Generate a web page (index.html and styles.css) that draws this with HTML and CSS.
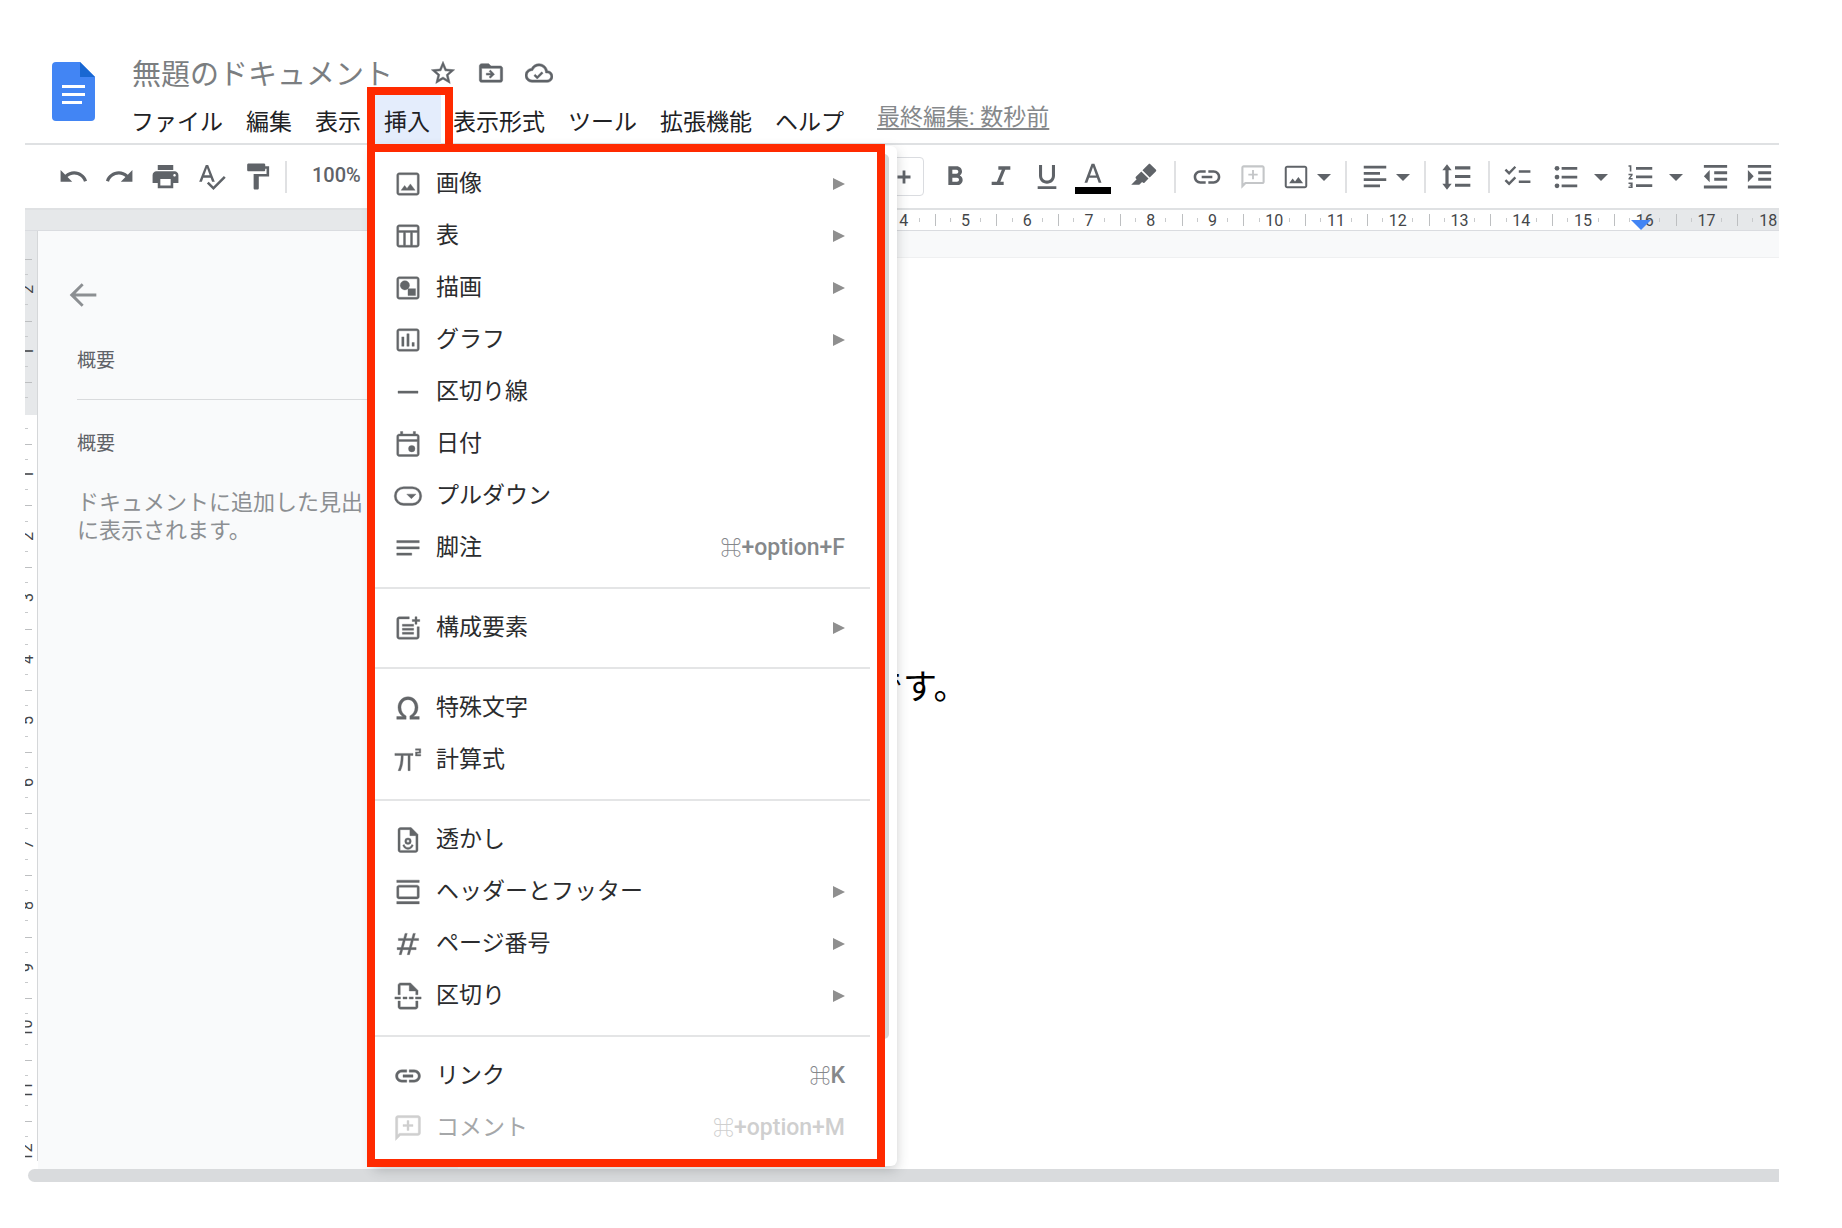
FILE: index.html
```html
<!DOCTYPE html>
<html lang="ja">
<head>
<meta charset="utf-8">
<title>無題のドキュメント</title>
<link rel="stylesheet" href="styles.css">
</head>
<body>
<svg class="sprite" aria-hidden="true">
  <defs>
    <symbol id="i-star" viewBox="0 0 24 24"><path d="M22 9.24l-7.19-.62L12 2 9.19 8.63 2 9.24l5.46 4.73L5.82 21 12 17.27 18.18 21l-1.63-7.03L22 9.24zM12 15.4l-3.76 2.27 1-4.28-3.32-2.88 4.38-.38L12 6.1l1.71 4.04 4.38.38-3.32 2.88 1 4.28L12 15.4z"/></symbol>
    <symbol id="i-move" viewBox="0 0 24 24"><path d="M20 6h-8l-2-2H4c-1.1 0-2 .9-2 2v12c0 1.100.9 2 2 2h16c1.100 0 2-.9 2-2V8c0-1.100-.9-2-2-2zm0 12H4V8h16v10zM11.500 9.500l3.500 3.500-3.500 3.500-1.100-1.100 1.600-1.600H8v-1.600h4l-1.600-1.600z"/></symbol>
    <symbol id="i-cloud" viewBox="0 0 24 24"><path d="M19.350 10.040C18.670 6.590 15.640 4 12 4 9.110 4 6.600 5.640 5.350 8.040 2.340 8.360 0 10.910 0 14c0 3.310 2.690 6 6 6h13c2.760 0 5-2.240 5-5 0-2.640-2.050-4.780-4.650-4.960zM19 18H6c-2.210 0-4-1.790-4-4 0-2.050 1.530-3.760 3.560-3.970l1.070-.11.5-.95C8.080 7.140 9.940 6 12 6c2.620 0 4.880 1.860 5.390 4.430l.3 1.500 1.530.11c1.560.1 2.780 1.410 2.780 2.960 0 1.650-1.350 3-3 3zm-8.500-3.200l-1.700-1.700-1.200 1.200 2.900 2.900 5-5-1.200-1.200z"/></symbol>
    <symbol id="i-undo" viewBox="0 0 24 24"><path d="M12.500 8c-2.650 0-5.050.99-6.900 2.600L2 7v9h9l-3.620-3.620c1.390-1.160 3.160-1.880 5.120-1.880 3.540 0 6.550 2.310 7.600 5.500l2.370-.78C21.080 11.030 17.150 8 12.500 8z"/></symbol>
    <symbol id="i-redo" viewBox="0 0 24 24"><path d="M18.400 10.600C16.550 8.990 14.150 8 11.500 8c-4.650 0-8.580 3.030-9.960 7.220L3.900 16c1.050-3.190 4.050-5.500 7.600-5.500 1.950 0 3.730.72 5.120 1.880L13 16h9V7l-3.600 3.600z"/></symbol>
    <symbol id="i-print" viewBox="0 0 24 24"><path d="M19 8H5c-1.660 0-3 1.340-3 3v6h4v4h12v-4h4v-6c0-1.660-1.340-3-3-3zm-3 11H8v-5h8v5zm3-7c-.55 0-1-.45-1-1s.45-1 1-1 1 .45 1 1-.45 1-1 1zm-1-9H6v4h12V3z"/></symbol>
    <symbol id="i-spell" viewBox="0 0 24 24"><path d="M12.450 16h2.090L9.430 3H7.570L2.460 16h2.090l1.120-3h5.640l1.140 3zm-6.020-5L8.500 5.480 10.570 11H6.430zm15.160.59l-8.090 8.090L9.830 16l-1.410 1.410 5.090 5.090L23 13l-1.410-1.410z"/></symbol>
    <symbol id="i-paint" viewBox="0 0 24 24"><path d="M18 4V3c0-.55-.45-1-1-1H5c-.55 0-1 .45-1 1v4c0 .55.45 1 1 1h12c.55 0 1-.45 1-1V6h1v4H9v11c0 .55.45 1 1 1h2c.55 0 1-.45 1-1v-9h8V4h-3z"/></symbol>
    <symbol id="i-plus" viewBox="0 0 24 24"><path d="M18.500 13.400h-5.100v5.100h-2.800v-5.100H5.500v-2.800h5.100V5.500h2.800v5.100h5.100z"/></symbol>
    <symbol id="i-bold" viewBox="0 0 24 24"><path d="M15.600 10.790c.97-.67 1.650-1.770 1.650-2.790 0-2.260-1.750-4-4-4H7v14h7.040c2.090 0 3.710-1.700 3.710-3.790 0-1.520-.86-2.820-2.150-3.420zM10 6.500h3c.83 0 1.500.67 1.500 1.500s-.67 1.500-1.500 1.500h-3v-3zm3.500 9H10v-3h3.500c.83 0 1.500.67 1.500 1.500s-.67 1.500-1.500 1.500z"/></symbol>
    <symbol id="i-italic" viewBox="0 0 24 24"><path d="M10 4v2.500h2.600l-3.700 9H5V18h9v-2.500h-2.500l3.700-9H19V4z"/></symbol>
    <symbol id="i-underline" viewBox="0 0 24 24"><path d="M12 17c3.310 0 6-2.690 6-6V3h-2.300v8c0 2.100-1.600 3.700-3.700 3.700S8.300 13.100 8.300 11V3H6v8c0 3.310 2.690 6 6 6zm-7 2v2h14v-2H5z"/></symbol>
    <symbol id="i-color" viewBox="0 0 30 36"><path d="M13.500 3h3L24 23h-3l-1.900-5.100h-8.200L9 23H6zm-1.700 12.300h6.400L15 6.500z" transform="translate(0 1)"/></symbol>
    <symbol id="i-marker" viewBox="0 0 24 24"><path d="M17.300 2.500l4.200 4.100c.5.500.5 1 0 1.500l-4.700 4.600-5.600-5.500 4.700-4.700c.4-.4 1-.4 1.400 0zM10.300 8.100l5.600 5.500-3 3c-.5.500-1 .5-1.500.1l-.5-.5-2.200 2.200H2.500l4.200-4.200-.6-.6c-.4-.5-.4-1 0-1.500z"/></symbol>
    <symbol id="i-link" viewBox="0 0 24 24"><path d="M3.900 12c0-1.710 1.390-3.100 3.100-3.100h4V7H7c-2.760 0-5 2.240-5 5s2.240 5 5 5h4v-1.900H7c-1.710 0-3.100-1.390-3.100-3.100zM8 13h8v-2H8v2zm9-6h-4v1.900h4c1.710 0 3.100 1.390 3.100 3.100s-1.390 3.100-3.100 3.100h-4V17h4c2.760 0 5-2.240 5-5s-2.240-5-5-5z"/></symbol>
    <symbol id="i-comment" viewBox="0 0 24 24"><path d="M2 22V4c0-1.100.9-2 2-2h16c1.100 0 2 .9 2 2v12c0 1.100-.9 2-2 2H6zM3.800 17.400l1.400-1.200h15V3.800H3.800zM11.200 6h1.600v3.200H16v1.600h-3.200V14h-1.600v-3.200H8V9.200h3.200z"/></symbol>
    <symbol id="i-image" viewBox="0 0 24 24"><path d="M19 3H5c-1.100 0-2 .9-2 2v14c0 1.100.9 2 2 2h14c1.100 0 2-.9 2-2V5c0-1.100-.9-2-2-2zm.4 16.400H4.600V4.600h14.800zM6.500 17l2.800-3.800 1.900 2.300 2.700-3.600L17.700 17z"/></symbol>
    <symbol id="i-align" viewBox="0 0 24 24"><path d="M3 3h18v2.200H3zm0 5h13v2.200H3zm0 5h18v2.200H3zm0 5h13v2.200H3z"/></symbol>
    <symbol id="i-spacing" viewBox="0 0 24 24"><path d="M5.700 7H8L4.500 2.500 1 7h2.300v10H1l3.500 4.500L8 17H5.700zM10.500 4v2.300H22V4zm0 15.300H22V17H10.500zm0-6.500H22v-2.300H10.500z"/></symbol>
    <symbol id="i-check" viewBox="0 0 24 24"><path d="M22 7.100h-9v1.900h9zM22 15.100h-9V17h9zM5.500 10.800L2 7.300l1.300-1.300 2.200 2.100 4.200-4.300L11 5.100zM5.500 19L2 15.500l1.300-1.300 2.200 2.100L9.700 12l1.300 1.300z"/></symbol>
    <symbol id="i-bullets" viewBox="0 0 24 24"><circle cx="4.800" cy="5" r="1.900"/><circle cx="4.800" cy="12" r="1.900"/><circle cx="4.800" cy="19" r="1.900"/><path d="M8.500 4H21v2.200H8.500zm0 7H21v2.200H8.500zm0 7H21v2.200H8.500z"/></symbol>
    <symbol id="i-numbers" viewBox="0 0 24 24"><path d="M2 17.500h2v.5H3v1h1v.5H2v1.200h3.300v-4.400H2zM3 7.500h1.300v-5H2v1.200h1zM2 10.600h1.900L2 12.900v1.100h3.300v-1.200H3.500l1.800-2.200V9.400H2zM8 4v2.200h13V4zm0 16h13v-2.200H8zm0-7h13v-2.200H8z"/></symbol>
    <symbol id="i-outdent" viewBox="0 0 24 24"><path d="M3 3h18v2.200H3zm8 5h10v2.200H11zm0 5h10v2.200H11zm-8 6h18v2.200H3zM3 11.800L7.500 7v9.500z"/></symbol>
    <symbol id="i-indent" viewBox="0 0 24 24"><path d="M3 3h18v2.200H3zm8 5h10v2.200H11zm0 5h10v2.200H11zm-8 6h18v2.200H3zM7.500 11.800L3 7v9.500z"/></symbol>
    <symbol id="i-caret" viewBox="0 0 14 14"><path d="M0 4h14l-7 7z"/></symbol>
    <symbol id="i-arrow" viewBox="0 0 12 12"><path d="M0 0l12 6-12 6z"/></symbol>
    <symbol id="i-back" viewBox="0 0 24 24"><path d="M22 10.800H6.400l6.100-6.200L11 3.100 2 12l9 8.900 1.500-1.500-6.100-6.200H22z"/></symbol>
    <symbol id="i-table" viewBox="0 0 24 24"><path d="M19 3H5c-1.100 0-2 .9-2 2v14c0 1.100.9 2 2 2h14c1.100 0 2-.9 2-2V5c0-1.100-.9-2-2-2zm.4 1.600v3H4.600v-3zM10 19.400V9.200h4v10.200zM4.600 9.200h3.800v10.200H4.600zm11 10.200V9.200h3.800v10.200z"/></symbol>
    <symbol id="i-drawing" viewBox="0 0 24 24"><path d="M19 3H5c-1.100 0-2 .9-2 2v14c0 1.100.9 2 2 2h14c1.100 0 2-.9 2-2V5c0-1.100-.9-2-2-2zm.4 16.400H4.600V4.600h14.800zM12 12.500h6V18h-6z"/><circle cx="9.500" cy="9.800" r="3.700"/></symbol>
    <symbol id="i-chart" viewBox="0 0 24 24"><path d="M19 3H5c-1.100 0-2 .9-2 2v14c0 1.100.9 2 2 2h14c1.100 0 2-.9 2-2V5c0-1.100-.9-2-2-2zm.4 16.400H4.600V4.600h14.800zM7 9.500h1.800V17H7zM11.100 7h1.800v10h-1.800zM15.200 14H17v3h-1.800z"/></symbol>
    <symbol id="i-line" viewBox="0 0 24 24"><path d="M4 11.200h16v1.800H4z"/></symbol>
    <symbol id="i-date" viewBox="0 0 24 24"><path d="M19 4h-1V2h-1.800v2H7.800V2H6v2H5c-1.100 0-2 .9-2 2v14c0 1.100.9 2 2 2h14c1.100 0 2-.9 2-2V6c0-1.100-.9-2-2-2zm.4 16.400H4.600V10h14.800zm0-12H4.600V5.600h14.800z"/><circle cx="15" cy="15.700" r="2.600"/></symbol>
    <symbol id="i-pulldown" viewBox="0 0 24 24"><path d="M8.500 4.500h7a7.500 7.500 0 0 1 0 15h-7a7.500 7.500 0 0 1 0-15zm0 1.700a5.800 5.800 0 0 0 0 11.600h7a5.800 5.800 0 0 0 0-11.600zM11 10.500h7.400L14.700 14.200z"/></symbol>
    <symbol id="i-footnote" viewBox="0 0 24 24"><path d="M3 6h18v1.800H3zm0 5h18v1.800H3zm0 5h12v1.800H3z"/></symbol>
    <symbol id="i-blocks" viewBox="0 0 24 24"><path d="M13 3v1.700H4.700v14.600h14.600V11H21v8c0 1.100-.9 2-2 2H5c-1.100 0-2-.9-2-2V5c0-1.100.9-2 2-2zM7.500 9h9v1.600h-9zm0 3.200h9v1.600h-9zm0 3.200h9V17h-9zM17.600 3h1.600v2.200h2.200v1.600h-2.200V9h-1.600V6.800h-2.200V5.200h2.200z"/></symbol>
    <symbol id="i-omega" viewBox="0 0 24 24"><path d="M3 18.800h4.800C5.300 17 4 14.500 4 11.500 4 6.800 7.400 3 12 3s8 3.800 8 8.500c0 3-1.300 5.500-3.800 7.300H21V21h-7.500v-2.700c2.600-1.300 4.100-3.700 4.100-6.800 0-3.500-2.300-6.200-5.600-6.200s-5.600 2.700-5.600 6.200c0 3.100 1.500 5.500 4.100 6.800V21H3z"/></symbol>
    <symbol id="i-pi" viewBox="0 0 24 24"><path d="M1.500 6.700h14.500v1.700h-2.300V20.500H12V8.400H8.200c0 5-.6 8.700-2.200 12.100H4.100c1.600-3.500 2.300-7.200 2.400-12.100h-5zM18 3h4.200v3.600h-2.800v1h2.800v1.200H18V5.500h2.900V4.200H18z"/></symbol>
    <symbol id="i-water" viewBox="0 0 24 24"><path d="M14.500 2H6c-1.100 0-2 .9-2 2v16c0 1.100.9 2 2 2h12c1.100 0 2-.9 2-2V7.500zm3.800 18.300H5.700V3.700h7.800v4.800h4.800zM12 10.300a2.600 2.600 0 1 1 0 5.200 2.600 2.600 0 0 1 0-5.200zm0 1.500a1.100 1.100 0 1 0 0 2.200 1.100 1.100 0 0 0 0-2.200zM9 15.500c.5 1.600 1.600 2.500 3 2.500s2.500-.9 3-2.500l1.200.7c-.6 2-2.200 3.300-4.200 3.300s-3.600-1.300-4.200-3.300z"/></symbol>
    <symbol id="i-header" viewBox="0 0 24 24"><path d="M3 2.500h18v1.900H3zm0 17.100h18v1.900H3zM19.200 6.500H4.800C3.800 6.500 3 7.300 3 8.300v7.400c0 1 .8 1.800 1.800 1.800h14.400c1 0 1.800-.8 1.800-1.800V8.300c0-1-.8-1.800-1.800-1.800zm.1 9.300H4.700V8.200h14.600z"/></symbol>
    <symbol id="i-hash" viewBox="0 0 24 24"><path d="M20.500 9.200V7.500h-3.700L17.900 3.500h-1.800L15 7.500h-4.700l1.100-4H9.600l-1.100 4H4.300v1.700H8l-1.500 5.600H3.300v1.700H6l-1.100 4h1.800l1.100-4h4.700l-1.100 4h1.800l1.100-4h4.200v-1.700h-3.700l1.500-5.600zm-7.500 5.600H8.300l1.500-5.600h4.700z"/></symbol>
    <symbol id="i-break" viewBox="0 0 24 24"><path d="M14 1.500H6c-1.100 0-2 .9-2 2V11h1.800V3.300H13V8h5.200v3H20V7.500zM4 16v4.500c0 1.100.9 2 2 2h12c1.100 0 2-.9 2-2V16h-1.800v4.700H5.800V16zM1.500 12.700h4.500v1.700H1.500zm6.500 0h3.200v1.700H8zm5 0h3.200v1.700H13zm5 0h4.500v1.700H18z"/></symbol>
  </defs>
</svg>

<div class="app">
  <header class="header">
    <svg class="logo" viewBox="0 0 43 59" role="img" aria-label="ドキュメント"><path fill="#4285f4" d="M4 0h24l15 15v40a4 4 0 0 1-4 4H4a4 4 0 0 1-4-4V4a4 4 0 0 1 4-4z"/><path fill="#1967d2" d="M28 0l15 15H28z"/><path fill="#fff" d="M10 23h23v3H10zm0 8h23v3H10zm0 8h20v3H10z"/></svg>
    <div class="heading">
      <div class="title-row">
        <input class="title" type="text" value="無題のドキュメント" aria-label="タイトル">
        <button class="title-btn" aria-label="スター"><svg><use href="#i-star"/></svg></button>
        <button class="title-btn" aria-label="移動"><svg><use href="#i-move"/></svg></button>
        <button class="title-btn" aria-label="保存状態"><svg><use href="#i-cloud"/></svg></button>
      </div>
      <nav class="menubar">
        <button class="menu-btn">ファイル</button>
        <button class="menu-btn">編集</button>
        <button class="menu-btn">表示</button>
        <div class="menu-open">
          <button class="menu-btn active" aria-expanded="true">挿入</button>
          <div class="popup" role="menu">
            <div class="popup-thumb"></div>
            <button class="item" role="menuitem"><svg class="icon"><use href="#i-image"/></svg><span>画像</span><svg class="more"><use href="#i-arrow"/></svg></button>
            <button class="item" role="menuitem"><svg class="icon"><use href="#i-table"/></svg><span>表</span><svg class="more"><use href="#i-arrow"/></svg></button>
            <button class="item" role="menuitem"><svg class="icon"><use href="#i-drawing"/></svg><span>描画</span><svg class="more"><use href="#i-arrow"/></svg></button>
            <button class="item" role="menuitem"><svg class="icon"><use href="#i-chart"/></svg><span>グラフ</span><svg class="more"><use href="#i-arrow"/></svg></button>
            <button class="item" role="menuitem"><svg class="icon"><use href="#i-line"/></svg><span>区切り線</span></button>
            <button class="item" role="menuitem"><svg class="icon"><use href="#i-date"/></svg><span>日付</span></button>
            <button class="item" role="menuitem"><svg class="icon"><use href="#i-pulldown"/></svg><span>プルダウン</span></button>
            <button class="item" role="menuitem"><svg class="icon"><use href="#i-footnote"/></svg><span>脚注</span><kbd><b>⌘</b>+option+F</kbd></button>
            <hr>
            <button class="item" role="menuitem"><svg class="icon"><use href="#i-blocks"/></svg><span>構成要素</span><svg class="more"><use href="#i-arrow"/></svg></button>
            <hr>
            <button class="item" role="menuitem"><svg class="icon"><use href="#i-omega"/></svg><span>特殊文字</span></button>
            <button class="item" role="menuitem"><svg class="icon"><use href="#i-pi"/></svg><span>計算式</span></button>
            <hr>
            <button class="item" role="menuitem"><svg class="icon"><use href="#i-water"/></svg><span>透かし</span></button>
            <button class="item" role="menuitem"><svg class="icon"><use href="#i-header"/></svg><span>ヘッダーとフッター</span><svg class="more"><use href="#i-arrow"/></svg></button>
            <button class="item" role="menuitem"><svg class="icon"><use href="#i-hash"/></svg><span>ページ番号</span><svg class="more"><use href="#i-arrow"/></svg></button>
            <button class="item" role="menuitem"><svg class="icon"><use href="#i-break"/></svg><span>区切り</span><svg class="more"><use href="#i-arrow"/></svg></button>
            <hr>
            <button class="item" role="menuitem"><svg class="icon"><use href="#i-link"/></svg><span>リンク</span><kbd><b>⌘</b>K</kbd></button>
            <button class="item" role="menuitem" disabled><svg class="icon"><use href="#i-comment"/></svg><span>コメント</span><kbd><b>⌘</b>+option+M</kbd></button>
          </div>
        </div>
        <button class="menu-btn">表示形式</button>
        <button class="menu-btn">ツール</button>
        <button class="menu-btn">拡張機能</button>
        <button class="menu-btn">ヘルプ</button>
        <a class="last-edit" href="#">最終編集: 数秒前</a>
      </nav>
    </div>
  </header>

  <div class="toolbar" role="toolbar">
    <button class="tool" aria-label="元に戻す"><svg><use href="#i-undo"/></svg></button>
    <button class="tool" aria-label="やり直し"><svg><use href="#i-redo"/></svg></button>
    <button class="tool" aria-label="印刷"><svg><use href="#i-print"/></svg></button>
    <button class="tool" aria-label="スペルチェック"><svg><use href="#i-spell"/></svg></button>
    <button class="tool" aria-label="書式の貼り付け"><svg><use href="#i-paint"/></svg></button>
    <span class="divider first"></span>
    <button class="zoom">100%</button>
    <div class="tools-right">
      <button class="stepper" aria-label="拡大"><svg><use href="#i-plus"/></svg></button>
      <button class="tool large" aria-label="太字"><svg><use href="#i-bold"/></svg></button>
      <button class="tool large" aria-label="斜体"><svg><use href="#i-italic"/></svg></button>
      <button class="tool large" aria-label="下線"><svg><use href="#i-underline"/></svg></button>
      <button class="tool text-color" aria-label="テキストの色"><svg><use href="#i-color"/></svg></button>
      <button class="tool marker" aria-label="ハイライト"><svg><use href="#i-marker"/></svg></button>
      <span class="divider"></span>
      <button class="tool large" aria-label="リンク"><svg><use href="#i-link"/></svg></button>
      <button class="tool small" aria-label="コメント" disabled><svg><use href="#i-comment"/></svg></button>
      <button class="split" aria-label="画像"><svg><use href="#i-image"/></svg><svg class="caret"><use href="#i-caret"/></svg></button>
      <span class="divider"></span>
      <button class="split" aria-label="配置"><svg><use href="#i-align"/></svg><svg class="caret"><use href="#i-caret"/></svg></button>
      <span class="divider"></span>
      <button class="tool large" aria-label="行間隔"><svg><use href="#i-spacing"/></svg></button>
      <span class="divider"></span>
      <button class="tool lead" aria-label="チェックリスト"><svg><use href="#i-check"/></svg></button>
      <button class="split wide" aria-label="箇条書き"><svg><use href="#i-bullets"/></svg><svg class="caret"><use href="#i-caret"/></svg></button>
      <button class="split wide" aria-label="番号付きリスト"><svg><use href="#i-numbers"/></svg><svg class="caret"><use href="#i-caret"/></svg></button>
      <button class="tool narrow" aria-label="インデント減"><svg><use href="#i-outdent"/></svg></button>
      <button class="tool" aria-label="インデント増"><svg><use href="#i-indent"/></svg></button>
    </div>
  </div>

  <div class="ruler">
    <div class="ruler-margin"></div>
    <div class="scale">
      <span>4</span><span>5</span><span>6</span><span>7</span><span>8</span><span>9</span><span>10</span><span>11</span><span>12</span><span>13</span><span>14</span><span>15</span><span class="edge">16</span><span class="outside">17</span><span class="outside">18</span>
    </div>
  </div>

  <main class="workspace">
    <div class="v-ruler">
      <div class="v-scale">
        <span class="outside"><b>2</b></span><span class="outside"><b>1</b></span><span class="edge"></span><span><b>1</b></span><span><b>2</b></span><span><b>3</b></span><span><b>4</b></span><span><b>5</b></span><span><b>6</b></span><span><b>7</b></span><span><b>8</b></span><span><b>9</b></span><span><b>10</b></span><span><b>11</b></span><span><b>12</b></span>
      </div>
    </div>
    <aside class="outline">
      <button class="back" aria-label="閉じる"><svg><use href="#i-back"/></svg></button>
      <h2 class="summary">概要</h2>
      <h2>概要</h2>
      <p>ドキュメントに追加した見出し<br>に表示されます。</p>
    </aside>
    <div class="canvas">
      <article class="page"><p>です。</p></article>
    </div>
  </main>
  <div class="h-scroll"></div>
</div>
</body>
</html>
```

FILE: styles.css
```css
* { box-sizing: border-box; }

body {
  margin: 0;
  background: #fff;
  color: #202124;
  font-family: Roboto, "Noto Sans CJK JP", sans-serif;
  font-size: 23px;
}

button {
  margin: 0;
  padding: 0;
  border: 0;
  background: none;
  color: inherit;
  font: inherit;
}

svg { display: block; fill: currentColor; }

.sprite { position: absolute; width: 0; height: 0; }

.app {
  display: flex;
  flex-direction: column;
  height: 100vh;
  padding: 0 63px 46px 25px;
}

/* Header */
.header {
  display: flex;
  gap: 25px;
  height: 145px;
  padding: 53px 0 0 27px;
  border-bottom: 2px solid #dfe1e3;
}

.logo { width: 43px; height: 59px; margin-top: 9px; }

.heading { flex: 1; }

.title-row {
  display: flex;
  align-items: center;
  gap: 20px;
  height: 40px;
  padding-left: 12px;
}

.title {
  width: 277px;
  height: 40px;
  padding: 0 0 2px;
  border: 0;
  background: none;
  color: #7b7e81;
  font: inherit;
  font-size: 29px;
}

.title-btn { color: #5f6368; }
.title-btn svg {
  width: 28px;
  height: 28px;
  stroke: currentColor;
  stroke-width: 0.4;
}

.menubar {
  display: flex;
  gap: 1px;
  height: 51px;
}

.menu-btn {
  height: 51px;
  padding: 2px 11px 0;
  white-space: nowrap;
}

.menu-btn.active { position: relative; background: #e4edfc; }

.menu-btn.active::after {
  content: "";
  position: absolute;
  inset: -6px -12px 0 -6px;
  border: 8px solid #ff2a00;
  border-bottom: 0;
}

.menu-open { position: relative; z-index: 2; }

.last-edit {
  margin-left: 21px;
  color: #85888b;
  line-height: 50px;
  text-underline-offset: 3px;
  white-space: nowrap;
}

/* Insert menu */
.popup {
  position: absolute;
  top: 53px;
  left: 0;
  width: 524px;
  padding: 12px 0;
  border-radius: 6px;
  background: #fff;
  box-shadow: 0 4px 12px rgba(60, 64, 67, 0.25);
}

.popup::after {
  content: "";
  position: absolute;
  inset: -2px 12px -1px -6px;
  border: 8px solid #ff2a00;
  pointer-events: none;
}

.popup-thumb {
  position: absolute;
  top: 8px;
  right: 8px;
  bottom: 127px;
  width: 10px;
  border-radius: 5px;
  background: #d6d6d6;
}

.item {
  display: flex;
  align-items: center;
  gap: 13px;
  width: 100%;
  height: 52px;
  padding: 0 52px 0 20px;
  color: #2b2c2e;
  text-align: left;
}

.item span { flex: 1; line-height: 32px; }
.item .icon {
  width: 30px;
  height: 30px;
  color: #636669;
  stroke: currentColor;
  stroke-width: 0.3;
}
.item .more { width: 12px; height: 12px; color: #8f8f8f; }
.item kbd {
  color: #85888b;
  font-family: inherit;
  font-weight: 500;
  line-height: 32px;
}
.item kbd b { font-size: 21px; font-weight: 700; }
.item:disabled span { color: #a5a7a9; }
.item:disabled .icon, .item:disabled kbd { color: #cfcfcf; }

.popup hr {
  height: 2px;
  margin: 13px 27px 13px 0;
  border: 0;
  background: #e4e5e6;
}

/* Toolbar */
.toolbar {
  display: flex;
  align-items: center;
  height: 63px;
  padding-left: 25px;
  overflow: hidden;
  color: #5f6368;
}

.tool {
  display: flex;
  flex: none;
  align-items: center;
  justify-content: center;
  width: 46px;
  height: 40px;
}

.tool svg { width: 31px; height: 31px; }
.tool.large svg { width: 32px; height: 32px; }
.tool.small svg { width: 28px; height: 28px; }
.tool.narrow { width: 42px; }
.tool.marker { width: 50px; padding-left: 4px; }
.tool.lead { justify-content: flex-start; padding-left: 4px; }
.tool:disabled { color: #c4c6c8; }

.tool.text-color { flex-direction: column; }
.tool.text-color svg { width: 30px; height: 34px; }
.tool.text-color::after {
  content: "";
  width: 36px;
  height: 7px;
  margin-top: -7px;
  background: #000;
}

.divider {
  flex: none;
  width: 2px;
  height: 32px;
  margin: 0 8px;
  background: #e0e1e3;
}

.divider.first { margin-left: 5px; }

.zoom {
  padding: 0 0 3px 17px;
  font-size: 20px;
  font-weight: 500;
}

.tools-right { display: flex; align-items: center; margin: 0 -3px 0 auto; }

.stepper {
  display: flex;
  align-items: center;
  justify-content: center;
  width: 41px;
  height: 39px;
  margin-right: 8px;
  border: 1px solid #dadce0;
  border-radius: 4px;
}

.stepper svg { width: 24px; height: 24px; }

.split {
  display: flex;
  align-items: center;
  gap: 6px;
  padding: 0 6px 0 5px;
}

.split.wide { gap: 13px; padding: 0 11px 0 7px; }
.split svg { width: 30px; height: 30px; }
.split .caret { width: 14px; height: 14px; }

/* Horizontal ruler */
.ruler {
  display: flex;
  height: 23px;
  overflow: hidden;
  border-top: 2px solid #dfe1e3;
  border-bottom: 1px solid #dadce0;
  color: #444649;
  font-size: 16px;
  line-height: 21px;
}

.ruler-margin {
  flex: 0 0 848px;
  background: linear-gradient(90deg, #e6e8ea 400px, #fff 0);
}

.scale { display: flex; flex: 1; margin-right: -20px; }

.scale span {
  flex: 1;
  text-align: center;
  background:
    linear-gradient(#bdbfc1, #bdbfc1) 0 50% / 1px 12px no-repeat,
    linear-gradient(#c8cacc, #c8cacc) 25% 50% / 1px 4px no-repeat,
    linear-gradient(#c8cacc, #c8cacc) 75% 50% / 1px 4px no-repeat;
}

.scale .outside { background-color: #e6e8ea; }

.scale .edge {
  position: relative;
  background:
    linear-gradient(#bdbfc1, #bdbfc1) 0 50% / 1px 12px no-repeat,
    linear-gradient(#c8cacc, #c8cacc) 25% 50% / 1px 4px no-repeat,
    linear-gradient(#c8cacc, #c8cacc) 75% 50% / 1px 4px no-repeat,
    linear-gradient(90deg, #fff 44%, #e6e8ea 0);
}

.scale .edge::after {
  content: "";
  position: absolute;
  bottom: 0;
  left: 44%;
  margin-left: -10px;
  border: 10px solid transparent;
  border-top-color: #4285f4;
  border-bottom: 0;
}

/* Workspace */
.workspace { display: flex; flex: 1; min-height: 0; }

.v-ruler {
  display: flex;
  width: 13px;
  margin-bottom: 8px;
  overflow: hidden;
  border-right: 1px solid #d5d7d9;
  background: linear-gradient(#e6e8ea 100px, #fff 0);
  color: #444649;
  font-size: 16px;
}

.v-scale {
  display: flex;
  flex: 1;
  flex-direction: column;
  margin: 28px 0 -22px;
}

.v-scale span {
  display: flex;
  flex: 1;
  align-items: center;
  justify-content: center;
  width: 12px;
  min-height: 0;
  padding-right: 8px;
  background:
    linear-gradient(#bdbfc1, #bdbfc1) 0 0 / 7px 1px no-repeat,
    linear-gradient(#c8cacc, #c8cacc) 0 25% / 3px 1px no-repeat,
    linear-gradient(#c8cacc, #c8cacc) 0 75% / 3px 1px no-repeat;
}

.v-scale .outside { background-color: #e6e8ea; }

.v-scale .edge {
  background:
    linear-gradient(#bdbfc1, #bdbfc1) 0 0 / 7px 1px no-repeat,
    linear-gradient(#c8cacc, #c8cacc) 0 25% / 3px 1px no-repeat,
    linear-gradient(#c8cacc, #c8cacc) 0 75% / 3px 1px no-repeat,
    linear-gradient(#e6e8ea 54%, #fff 0);
}

.v-scale b { font-weight: 400; transform: rotate(-90deg); }

.outline {
  flex: 0 0 420px;
  padding: 48px 0 0 39px;
  background: #f9fafb;
  color: #8c8f92;
}

.back { display: block; margin-left: -10px; color: #8c8f92; }
.back svg { width: 32px; height: 32px; }

.outline h2 {
  margin: 0;
  color: #5f6368;
  font-size: 19px;
  font-weight: 400;
  line-height: 28px;
}

.outline .summary {
  margin: 36px 0 30px;
  padding-bottom: 24px;
  border-bottom: 1px solid #d9dbdd;
}

.outline p {
  margin: 31px 0 0;
  font-size: 22px;
  line-height: 28px;
  white-space: nowrap;
}

.canvas { flex: 1; padding-top: 26px; background: #f8f9fa; }

.page {
  height: 100%;
  padding: 405px 0 0 411px;
  border-top: 1px solid #eff0f1;
  background: #fff;
  color: #000;
}

.page p { margin: 0; font-size: 34px; line-height: 48px; }

.h-scroll {
  flex: none;
  height: 13px;
  margin-left: 3px;
  border-radius: 7px 0 0 7px;
  background: #d9dbdd;
}
```
